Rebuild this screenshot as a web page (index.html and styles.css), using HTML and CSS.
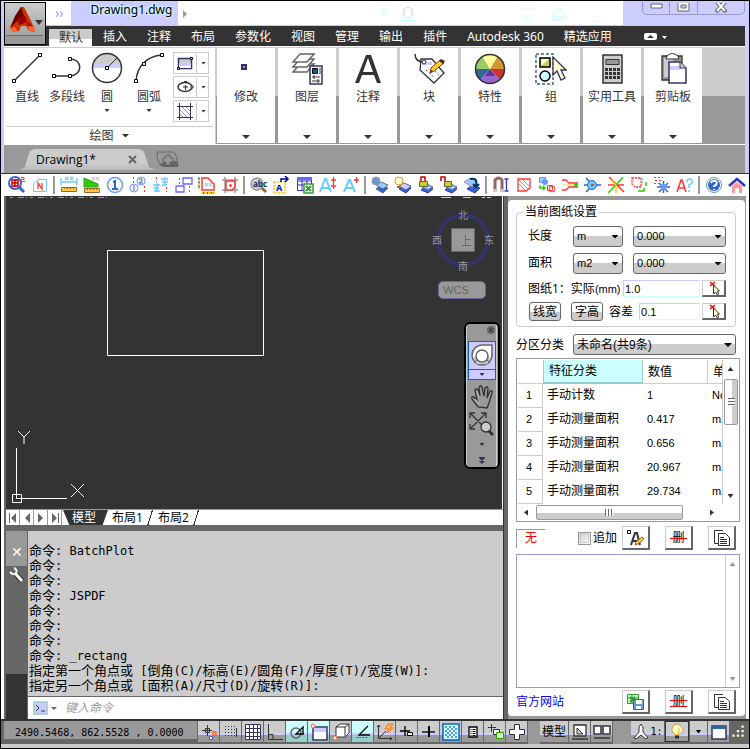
FILE: index.html
```html
<!DOCTYPE html>
<html lang="zh-CN">
<head>
<meta charset="utf-8">
<title>Drawing1.dwg</title>
<link rel="stylesheet" href="styles.css">
</head>
<body>
<header class="head">
  <button class="app" aria-label="应用程序菜单"><svg width="40" height="41" viewBox="0 0 40 41"><path fill="#999" d="M1 32h37v7H1z"/><path fill="#669" d="M1 32h37v1H1z"/><path fill="#c30" d="M16 4 5 25l3 4 6-1 2-5h5l3 5 6 1-3-9-8-16z"/><path fill="#600" d="m16 4 3 9-8 6-6 6 5-12z"/><path fill="#f63" d="M5 25l2 4 6 0-3-5zM23 23l7 1v5l-6-1z"/><path fill="#900" d="m12 14 8-1 2 6-8 3zM22 19l6 4-5 0z"/><path fill="#333" d="M30 17h8l-4 5z"/></svg></button>
  <div class="title">
    <span class="quick">››</span>
    <h1>Drawing1.dwg</h1>
    <span class="search"><svg width="445" height="24" viewBox="0 0 445 24"><path fill="#999" d="m5 9 4 4-4 4z"/><g fill="none" stroke="#cff" stroke-width="1.3"><path d="M205 15v-6h3v6M222 20l6-4h4l6 4zM344 8h5m3 0h5m-12 9h4l4 2M379 8l-5 8h14l-5-8zM374 19h12M417 20h4"/></g><path fill="none" stroke="#ccf" d="M226 15V8l4-2 4 2v7"/></svg></span>
    <div class="win">
      <button aria-label="最小化"><svg width="13" height="6" viewBox="0 0 13 6"><path fill="#fff" stroke="#666" d="M1 1h11v4H1z"/></svg></button>
      <button aria-label="还原"><svg width="13" height="9" viewBox="0 0 13 9"><path fill="#fff" stroke="#666" d="M1-2h11V8H1z"/><path fill="#ccf" stroke="#666" d="M4 2h5v3H4z"/></svg></button>
      <button aria-label="关闭"><svg width="12" height="10" viewBox="0 0 12 10"><path stroke="#666" stroke-width="4" d="m1-2 10 11M11-2 1 9"/><path stroke="#fff" stroke-width="2" d="m2-1 8 9M10-1 2 8"/></svg></button>
    </div>
  </div>
  <nav class="menu">
    <a href="#" class="on">默认</a><a href="#">插入</a><a href="#">注释</a><a href="#">布局</a><a href="#">参数化</a><a href="#">视图</a><a href="#">管理</a><a href="#">输出</a><a href="#">插件</a><a href="#">Autodesk 360</a><a href="#">精选应用</a>
    <svg class="fold" width="24" height="8" viewBox="0 0 24 8"><rect width="13" height="7" rx="2" fill="#fff"/><path fill="#333" d="M3 5h7L6.500 2zM5 3h3"/><path fill="#fff" d="M18 3h5l-2.500 3z"/></svg>
  </nav>
  <div class="ribbon">
    <section class="draw">
      <div class="tools">
        <button class="tool"><svg width="32" height="32" viewBox="0 0 32 32"><path stroke="#333" stroke-width="1.500" d="M3 29 29 3"/><path fill="#fff" stroke="#000" d="M1.500 27.500h3v3h-3zM27.500 1.500h3v3h-3z"/></svg>直线</button>
        <button class="tool"><svg width="32" height="32" viewBox="0 0 32 32"><path fill="none" stroke="#333" stroke-width="1.500" d="M3 24h16c13-1 13-17 0-17"/><path fill="#fff" stroke="#000" d="M1.500 22.500h3v3h-3zM17.500 22.500h3v3h-3zM17.500 5.500h3v3h-3z"/></svg>多段线</button>
        <button class="tool"><svg width="32" height="32" viewBox="0 0 32 32"><circle cx="16" cy="16" r="14.500" fill="#fff"/><path fill="#ccc" d="M2.500 12C7-2 25-2 29.500 12z"/><path fill="#ccf" d="M2 12h28v4H2z"/><circle cx="16" cy="16" r="14.500" fill="none" stroke="#333" stroke-width="1.500"/><path stroke="#333" d="M16 16 26 6"/><path fill="#fff" stroke="#000" d="M14.500 14.500h3v3h-3z"/></svg>圆<i class="dn"></i></button>
        <button class="tool"><svg width="32" height="32" viewBox="0 0 32 32"><path fill="none" stroke="#333" stroke-width="1.500" d="M3 29C4 14 14 4 29 3"/><path fill="#fff" stroke="#000" d="M1.500 27.500h3v3h-3zM9.500 10.500h3v3h-3zM27.500 1.500h3v3h-3z"/></svg>圆弧<i class="dn"></i></button>
        <div class="minis">
          <button class="mini" aria-label="矩形"><svg width="22" height="19" viewBox="0 0 22 19"><path fill="#ccc" stroke="#336" stroke-width="1.500" d="M4.500 4.500h13v10h-13z"/><path fill="#fff" d="M5 11h12v3H5z"/><path fill="#ccf" d="M5 9h12v3H5z"/><path fill="#fff" stroke="#000" d="M3.500 13.500h2v2h-2zM16.500 3.500h2v2h-2z"/></svg><i class="dn"></i></button>
          <button class="mini" aria-label="椭圆"><svg width="22" height="19" viewBox="0 0 22 19"><ellipse cx="11" cy="9" rx="7" ry="4.500" fill="none" stroke="#333" stroke-width="1.500"/><path stroke="#333" d="M9 9h5m-2.500-2v5"/><path fill="#fff" stroke="#333" d="M17 8h2v2h-2zM10 3.500h3"/></svg><i class="dn"></i></button>
          <button class="mini" aria-label="图案填充"><svg width="22" height="19" viewBox="0 0 22 19"><path stroke="#99c" d="m5 7 8 8M5 11l4 4M8 5l8 8M12 5l5 5"/><path fill="none" stroke="#336" d="M5.500 1v17M16.500 1v17M3 4.500h16M3 15.500h16"/></svg><i class="dn"></i></button>
        </div>
      </div>
      <button class="group">绘图 <i class="dn big"></i></button>
    </section>
    <button class="panel"><svg width="32" height="32" viewBox="0 0 32 32"><path fill="#99c" stroke="#336" stroke-width="2" d="M12 12h4v4h-4z"/></svg>修改<i class="dn big"></i></button>
    <button class="panel"><svg width="32" height="32" viewBox="0 0 32 32"><g fill="#fff" stroke="#666" stroke-width="1.500"><path d="m2 19 7-8h14l-7 8z"/><path d="m2 14 7-8h14l-7 8z"/><path d="m2 9 7-8h14l-7 8z"/></g><path fill="#fff" stroke="#336" stroke-width="1.500" d="M19 13h12v18H19z"/><path fill="#069" stroke="#000" d="M21.500 15.500h5v5h-5z"/><path fill="#999" d="M28 15h2v6h-2z"/><path stroke="#333" d="M21 24h8M21 28h8m-6-6v4m4 0v4"/></svg>图层<i class="dn big"></i></button>
    <button class="panel"><svg width="32" height="32" viewBox="0 0 32 32"><path fill="#333" fill-rule="evenodd" d="M14 2h5l10 28h-4l-3-8H10l-3 8H3zm2 3-5 14h10z"/></svg>注释<i class="dn big"></i></button>
    <button class="panel"><svg width="32" height="32" viewBox="0 0 32 32"><path fill="#fff" stroke="#333" stroke-width="1.300" d="M8 6h11l12 14-10 10L7 17z"/><path fill="#ccf" d="M9 9h10v3H9z"/><path fill="none" stroke="#333" stroke-width="1.500" d="M2 1c0 6 4 8 9 8"/><circle cx="11" cy="9" r="2" fill="#fff" stroke="#333"/><path stroke="#666" stroke-dasharray="2 2" d="m13 17 9 8m0-7 5 5"/><path fill="#fc3" stroke="#930" d="m17 20 1-5 9-8 4 3-10 8z"/><path fill="#333" d="m17 20 1-3 2 1zM26 8l2-2 4 2-2 3z"/></svg>块<i class="dn big"></i></button>
    <button class="panel"><svg width="32" height="32" viewBox="0 0 32 32"><path fill="#ff9" d="m16 16-8-13q8-5 16 0z"/><path fill="#c93" d="M16 16 24 3q7 5 7 13z"/><path fill="#c33" d="M16 16h15q0 8-5 11z"/><path fill="#96c" d="m16 16 10 11q-10 8-20 0z"/><path fill="#639" d="m16 16 5 7H11z"/><path fill="#369" d="M16 16 6 27q-5-4-5-11z"/><path fill="#9c6" d="M16 16H1Q1 8 8 3z"/><circle cx="16" cy="16" r="14.500" fill="none" stroke="#333" stroke-width="1.500"/></svg>特性<i class="dn big"></i></button>
    <button class="panel"><svg width="32" height="32" viewBox="0 0 32 32"><path fill="none" stroke="#369" stroke-width="1.500" stroke-dasharray="3 2" d="M1 1h17v30H1z"/><path fill="#cc6" stroke="#000" stroke-width="1.500" d="M5 5h10v9H5z"/><path fill="#ffc" d="M6 6h8l-8 7z"/><circle cx="10" cy="23" r="5" fill="#cff" stroke="#000" stroke-width="1.500"/><path fill="#ffc" stroke="#336" stroke-width="1.300" d="M18 4v18l4-4 4 9 4-2-4-8h5z"/></svg>组<i class="dn big"></i></button>
    <button class="panel"><svg width="32" height="32" viewBox="0 0 32 32"><path fill="#ccc" stroke="#333" stroke-width="1.500" d="M7 2h19v28H7z"/><path fill="#999" stroke="#333" d="M10 6.500h13v5H10z"/><g fill="#333"><path d="M9 15h3v3H9zM13 15h3v3h-3zM17 15h3v3h-3zM21 15h3v3h-3zM9 19h3v3H9zM13 19h3v3h-3zM17 19h3v3h-3zM21 19h3v3h-3zM9 23h3v3H9zM13 23h3v3h-3zM17 23h3v3h-3zM21 23h3v3h-3z"/></g></svg>实用工具<i class="dn big"></i></button>
    <button class="panel"><svg width="32" height="32" viewBox="0 0 32 32"><path fill="#999" stroke="#333" stroke-width="1.300" d="M5 3h20v24H5z"/><path fill="#ccc" d="M7 5h9v19H7z"/><path fill="#fff" stroke="#333" d="M10 3q5-5 11 0l1 3H9z"/><path fill="#fff" stroke="#336" stroke-width="1.500" d="M12 9h11l6 6v15H12z"/><path fill="#ccf" d="M13 13h10v4H13z"/><path fill="#ccc" stroke="#336" d="M23 9v6h6"/></svg>剪贴板<i class="dn big"></i></button>
  </div>
  <div class="docs">
    <div class="doc"><a href="#">Drawing1*</a><button aria-label="关闭图形"><svg width="9" height="9" viewBox="0 0 9 9"><path stroke="#666" stroke-width="2" d="m1 1 7 7M8 1 1 8"/></svg></button></div>
    <button class="newdoc" aria-label="新图形"><svg width="24" height="18" viewBox="0 0 24 18"><path fill="#999" stroke="#666" d="M1 1h16q4 1 5 14H7Q1 13 1 1z"/><path fill="#666" d="M3 14q8-7 19-3v5H8z"/><path fill="#999" stroke="#666" d="M10 4h4v3h3v4h-3v3h-4v-3H7V7h3z"/></svg></button>
  </div>
</header>

<div class="bar">
  <button aria-label="查找面积"><svg viewBox="0 0 18 18"><circle cx="7" cy="7" r="6" fill="#fff" stroke="#36c" stroke-width="2"/><path stroke="#36c" stroke-width="3" d="m11 11 5 5"/><path fill="none" stroke="#c00" stroke-width="1.500" d="M4 4h6v6H4zm0 3h6M7 3v8"/><path fill="none" stroke="#f33" d="M13 1.500h3v2h-3v2h4"/></svg></button>
  <button aria-label="编号"><svg viewBox="0 0 18 18"><path fill="none" stroke="#6cf" d="M2.500 15.500v-8l5-4h8v12z"/><path fill="none" stroke="#f33" stroke-width="1.300" d="M7 13V7l4 6V7"/></svg></button><hr>
  <button aria-label="长度"><svg viewBox="0 0 18 18"><path fill="#fc3" stroke="#963" d="M1.500 11.500h15v4h-15z"/><path stroke="#6cf" stroke-width="1.300" d="M1 2v7m16-7v7M2 6h15M5 1l3 3m0-3L5 4m5-3 3 3m0-3-3 3"/><path stroke="#963" d="M4.500 11v2m3-2v2m3-2v2m3-2v2"/></svg></button>
  <button aria-label="面积"><svg viewBox="0 0 18 18"><path fill="#3c0" stroke="#393" d="m1 2 14 6v3H1z"/><path fill="#fc3" stroke="#963" d="M1.500 12.500h15v4h-15z"/><path stroke="#963" d="M4.500 12v2m3-2v2m3-2v2m3-2v2"/><path stroke="#6cf" d="m9 1 3 3m0-3L9 4m4-3 3 3m0-3-3 3"/></svg></button>
  <button aria-label="计数"><svg viewBox="0 0 18 18"><circle cx="9" cy="9" r="7.500" fill="#fff" stroke="#69f" stroke-width="1.500"/><path stroke="#36c" stroke-width="2" d="M9 4v9M6 13h6M7 6l2-1"/></svg></button>
  <button aria-label="连续计数"><svg viewBox="0 0 18 18"><circle cx="5" cy="12" r="4" fill="none" stroke="#69f"/><circle cx="12" cy="5" r="4" fill="none" stroke="#69f"/><path fill="none" stroke="#36c" d="M5 9v6M10 3h3v2l-3 2h4"/><path stroke="#f33" stroke-dasharray="2 2" d="M4.500 1v6M15.500 10v6"/></svg></button>
  <button aria-label="文字求和"><svg viewBox="0 0 18 18"><path stroke="#6cf" stroke-width="1.300" d="M9 3h7M10 6h6m-6 3h5M13 1v8M1 9h7M2 12h5m-5 3h6M5 7v9"/><path stroke="#f33" stroke-dasharray="2 2" d="M4.500 1v5M14.500 11v5"/></svg></button>
  <button aria-label="对齐"><svg viewBox="0 0 18 18"><path fill="none" stroke="#66f" stroke-width="1.300" d="M8 2h9v6H8zM1 10h8v6H1z"/><path stroke="#f33" stroke-dasharray="2 2" d="M4.500 2v6M14.500 10v6"/></svg></button>
  <button aria-label="区域标注"><svg viewBox="0 0 18 18"><path fill="#fff" stroke="#f33" stroke-width="1.500" d="M4 2h6l6 6v6H4z"/><path stroke="#fc0" stroke-width="2" d="M1 1v12m3 4h13"/><path stroke="#36c" stroke-width="2" stroke-dasharray="1 3" d="M1 2v11m4 4h11"/><path stroke="#6cf" d="m7 7 3 3m0-3-3 3m4-3 3 3m0-3-3 3"/></svg></button>
  <button aria-label="边框"><svg viewBox="0 0 18 18"><path stroke="#999" stroke-width="1.500" d="M4 1v16M14 1v16M1 4h16M1 14h16"/><path fill="#fff" stroke="#f33" stroke-width="1.500" d="M5 5h9v6l-3 3H5z"/><path stroke="#f33" d="M8 9.500h3M9.500 8v3"/></svg></button><hr>
  <button aria-label="查找文字"><svg viewBox="0 0 18 18"><circle cx="7" cy="8" r="6" fill="#ccc" stroke="#999" stroke-width="1.500"/><path stroke="#963" stroke-width="3" d="m12 12 4 4"/><text x="3" y="11" font-size="8" font-weight="700" fill="#036">abc</text></svg></button>
  <button aria-label="文字框"><svg viewBox="0 0 18 18"><path fill="none" stroke="#fc0" stroke-dasharray="2 1" stroke-width="1.500" d="M1 6h11v11H1z"/><text x="3" y="15" font-size="9" font-weight="700" fill="#009">A</text><path fill="none" stroke="#009" stroke-width="1.500" d="M8 6V3h7m-3-3 3 3-3 3"/></svg></button>
  <button aria-label="导出表格"><svg viewBox="0 0 18 18"><path fill="#fff" stroke="#33c" d="M1.500 1.500h14v13h-14zM2 5h13M2 9h13M6 3v11M11 3v11"/><path fill="#66f" d="M1 1h15v3H1z"/><path fill="#fff" stroke="#393" stroke-width="1.500" d="M8 8h9v9H8z"/><path stroke="#393" stroke-width="2" d="m10 10 5 5m0-5-5 5"/></svg></button>
  <button aria-label="文字高度"><svg viewBox="0 0 18 18"><path fill="none" stroke="#6cf" stroke-width="2" d="M1 16 6 3h1l5 13M3 12h7"/><path stroke="#f33" stroke-width="1.300" d="M14.500 1v12M12 4h5m-5 6h5"/></svg></button>
  <button aria-label="增加文字"><svg viewBox="0 0 18 18"><path fill="none" stroke="#6cf" stroke-width="2" d="M2 16 7 4h1l5 12M4 12h7"/><path stroke="#f33" stroke-width="1.300" d="M14.500 1v6M12 4h5"/></svg></button><hr>
  <button aria-label="关闭图层"><svg viewBox="0 0 18 18"><path fill="#36c" stroke="#669" d="m5 13 5-4 7 3-5 5z"/><path fill="#9cf" stroke="#669" d="m5 9 5-3 7 3-5 4z"/><circle cx="5" cy="5" r="4" fill="#69c" stroke="#999"/></svg></button>
  <button aria-label="打开图层"><svg viewBox="0 0 18 18"><path fill="#36c" stroke="#33c" d="m5 13 5-4 7 3-5 5z"/><path fill="#ccf" stroke="#669" d="m5 10 5-3 7 3-5 4z"/><circle cx="5" cy="5" r="4" fill="#ffc" stroke="#c93"/><path stroke="#963" stroke-width="2" d="M3 11h4"/></svg></button>
  <button aria-label="锁定图层"><svg viewBox="0 0 18 18"><path fill="#36c" stroke="#33c" d="m4 14 5-4 7 3-5 4z"/><path fill="#9cf" stroke="#669" d="m5 11 5-3 6 3-5 3z"/><path fill="none" stroke="#c00" stroke-width="1.500" d="M4 6V1h4v5"/><path fill="#cc3" stroke="#663" d="M2.500 5.500h8v5h-8z"/></svg></button>
  <button aria-label="解锁图层"><svg viewBox="0 0 18 18"><path fill="#36c" stroke="#33c" d="m5 14 5-4 7 3-5 4z"/><path fill="#9cf" stroke="#669" d="m6 11 5-3 6 3-5 3z"/><path fill="none" stroke="#c00" stroke-width="1.500" d="M1 5V1h4v5"/><path fill="#cc3" stroke="#663" d="M4.500 5.500h7v5h-7z"/></svg></button>
  <button aria-label="恢复图层"><svg viewBox="0 0 18 18"><path fill="#36c" stroke="#33c" d="m4 13 5-4 8 3-5 5z"/><path fill="#9cf" stroke="#99c" d="m1 6 6-4 7 4-5 5z"/><path fill="none" stroke="#036" stroke-width="2" d="M7 3q8-2 6 7m-3-2 3 3 3-3"/></svg></button><hr>
  <button aria-label="捕捉"><svg viewBox="0 0 18 18"><path fill="none" stroke="#966" stroke-width="3" d="M3 16V4q4-4 7 0v12"/><path stroke="#ccc" stroke-width="3" d="M3 13v3m7-3v3"/><path stroke="#33c" stroke-width="1.300" d="M14.500 3v12m-2-12h4m-4 12h4"/></svg></button>
  <button aria-label="填充"><svg viewBox="0 0 18 18"><path stroke="#999" d="m4 4 10 10M8 4l6 6M4 8l6 6"/><path fill="none" stroke="#f33" stroke-width="1.300" d="M3 3h12v9l-4 3H3z"/></svg></button>
  <button aria-label="替换块"><svg viewBox="0 0 18 18"><path fill="#9cf" stroke="#69f" d="M1.500 1.500h6v5h-6z"/><circle cx="7" cy="6" r="3" fill="#69f"/><path fill="none" stroke="#3c0" stroke-width="1.500" d="M2 9v3h5m-2-2 2 2-2 2"/><path fill="none" stroke="#f33" d="M9.500 9.500h5v5h-5z"/><circle cx="14" cy="13" r="3" fill="none" stroke="#f33"/></svg></button>
  <button aria-label="合并线"><svg viewBox="0 0 18 18"><path fill="none" stroke="#f33" stroke-width="1.300" d="M1 4h4l3 3h9M1 14h4l3-3h9"/><path stroke="#fc3" d="M2 9h12"/><circle cx="15" cy="9" r="2" fill="#3c0"/></svg></button>
  <button aria-label="交点"><svg viewBox="0 0 18 18"><path stroke="#36c" stroke-width="1.500" d="M0 9h17M2 2l5 5m-5 9 5-5"/><circle cx="8" cy="9" r="4.500" fill="#6cf" stroke="#36c"/><path stroke="#f33" stroke-width="2" d="M7 9h3"/></svg></button>
  <button aria-label="打断"><svg viewBox="0 0 18 18"><path stroke="#f33" stroke-width="1.500" d="m2 1 15 15M1 9h16"/><path stroke="#3c0" stroke-width="1.500" d="M9 9 1 17M9 9l7-8"/><path stroke="#fc0" stroke-width="1.500" d="M9 9v8M9 9 4 4"/></svg></button>
  <button aria-label="轮廓"><svg viewBox="0 0 18 18"><path fill="none" stroke="#f33" stroke-dasharray="2 1" stroke-width="1.300" d="M2 2h9v9H5l-3-3z"/><path fill="none" stroke="#3c0" stroke-width="1.500" d="M16 6v4M8 15h6v-3"/><path stroke="#6cf" d="M12 1v7"/></svg></button>
  <button aria-label="分解"><svg viewBox="0 0 18 18"><path stroke="#f33" stroke-dasharray="2 2" d="M1 1.500h9M2 4.500h7M1 7.500h5"/><path stroke="#36c" stroke-width="1.500" d="m6 7 9 9M15 7l-9 9M10.500 5v12M4 11h13"/><circle cx="10.500" cy="11" r="3" fill="#69f"/></svg></button>
  <button aria-label="文字查询"><svg viewBox="0 0 18 18"><path fill="none" stroke="#f33" stroke-width="1.500" d="m1 16 4-12h1l4 12M3 12h6"/><path fill="none" stroke="#6cf" stroke-width="1.500" d="M11 6q0-3 3-3t2 4l-3 2v3m0 2v2"/></svg></button><hr>
  <button aria-label="帮助"><svg viewBox="0 0 18 18"><circle cx="9" cy="9" r="7.500" fill="#fff" stroke="#69c"/><circle cx="9" cy="9" r="6" fill="#36c"/><path fill="none" stroke="#fff" stroke-width="2" d="M6 7q1-3 4-2t1 4l-2 1v1m0 2v1"/></svg></button>
  <button aria-label="主页"><svg viewBox="0 0 18 18"><path fill="#f99" d="M4 10 9 6l5 4v7h-3v-5H7v5H4z"/><path fill="none" stroke="#33c" stroke-width="2.500" d="m1 10 8-7 8 7"/></svg></button>
</div>

<main class="main">
  <div class="left">
    <div class="canvas">
      <svg class="sketch" width="260" height="162" viewBox="0 0 260 162"><path fill="none" stroke="#fff" d="M101.500 53.500h156v105h-156z"/><path stroke="#999" stroke-dasharray="3 5 6 2 1 3" d="M4 .500h100"/></svg>
      <svg class="ucs" width="80" height="76" viewBox="0 0 80 76"><path fill="none" stroke="#fff" d="M10.500 19v50.500H61M6.500 65.500v8h9v-8h-9zM12 2l6 6 6-6m-6 6v7M65 55l13 13M78 55 65 68"/></svg>
      <svg class="clip" width="56" height="3" viewBox="0 0 56 3"><path stroke="#ccc" d="M0 1.500h10m12 0h8m11 0h3m2 0h4"/></svg>
      <div class="cube">
        <svg width="64" height="64" viewBox="0 0 64 64"><circle cx="32" cy="33" r="25" fill="none" stroke="#336" stroke-width="4"/><path fill="#999" stroke="#666" d="M20.500 21.500h23v23h-23z"/><path fill="none" stroke="#666" d="M34.500 28v10m0-5.500h5M31 38.500h9"/></svg>
        <b class="n">北</b><b class="w">西</b><b class="e">东</b><b class="s">南</b>
      </div>
      <button class="wcs">WCS<i class="dn"></i></button>
      <div class="nav">
        <button class="x" aria-label="关闭"><svg width="8" height="8" viewBox="0 0 8 8"><circle cx="4" cy="4" r="4" fill="#666"/><path stroke="#333" d="m2 2 4 4m0-4L2 6"/></svg></button>
        <button class="wheel" aria-label="控制盘"><svg width="26" height="26" viewBox="0 0 26 26"><path fill="#fff" stroke="#666" stroke-width="1.500" d="M13 2h10v11a10 10 0 1 1-10-11z"/><path fill="#ccc" d="M4 14h18l-4 7H8z"/><circle cx="13" cy="13" r="6" fill="#fff" stroke="#666" stroke-width="1.500"/><path stroke="#666" d="m5 20 4-4m12 4-4-4"/></svg></button>
        <button class="more" aria-label="更多"><i class="dn"></i></button>
        <button class="pan" aria-label="平移"><svg width="24" height="26" viewBox="0 0 24 26"><path fill="#999" stroke="#333" stroke-width="1.300" d="M8 23 2 15q-1-3 2-2l3 3L5 6q1-2 3 0l2 6-1-9q2-2 3 0l2 9 1-8q2-2 3 0l-1 10 3-7q3-1 2 2l-3 10-2 5z"/><path fill="none" stroke="#ccc" d="m5 15 4 5m-2-13 2 6"/></svg></button>
        <button class="zoom" aria-label="缩放"><svg width="26" height="24" viewBox="0 0 26 24"><path fill="none" stroke="#333" stroke-width="1.300" d="m2 2 14 14M16 2 2 16M1 6V1h5m6 0h5v5M1 12v5h5"/><circle cx="17" cy="15" r="5" fill="#ccc" stroke="#333" stroke-width="1.300"/><path stroke="#333" stroke-width="3" d="m20 19 4 4"/></svg><i class="dn"></i></button>
        <button class="opt" aria-label="选项"><svg width="8" height="8" viewBox="0 0 8 8"><path fill="#336" d="M1 0h6v1H1zm0 1h6L4 4zm0 3h6L4 7z"/></svg></button>
      </div>
    </div>
    <div class="sheets">
      <button aria-label="首页"><svg width="10" height="10" viewBox="0 0 10 10"><path fill="#666" d="M1 0h1v10H1zM8 0v10L3 5z"/></svg></button><button aria-label="上一页"><svg width="10" height="10" viewBox="0 0 10 10"><path fill="#666" d="M8 0v10L3 5z"/></svg></button><button aria-label="下一页"><svg width="10" height="10" viewBox="0 0 10 10"><path fill="#666" d="M2 0v10l5-5z"/></svg></button><button aria-label="末页"><svg width="10" height="10" viewBox="0 0 10 10"><path fill="#666" d="M2 0v10l5-5zM8 0h1v10H8z"/></svg></button>
      <a href="#" class="model">模型</a><a href="#">布局1</a><a href="#">布局2</a>
    </div>
    <div class="cmd">
      <div class="grip"><button aria-label="关闭">✕</button><button class="wrench" aria-label="自定义"><svg width="16" height="16" viewBox="0 0 16 16"><path fill="none" stroke="#333" stroke-width="5" d="m6 6 7 8"/><path fill="none" stroke="#fff" stroke-width="3" d="m6 6 7 8"/><path fill="none" stroke="#fff" stroke-width="2" d="M5 1q4 2 2 5T1 5"/></svg></button><span></span></div>
      <div class="log">
        <ol>
          <li>命令<span>: BatchPlot</span></li><li>命令<span>:</span></li><li>命令<span>:</span></li><li>命令<span>: JSPDF</span></li><li>命令<span>:</span></li><li>命令<span>:</span></li><li>命令<span>:</span></li><li>命令<span>: _rectang</span></li>
          <li>指定第一个角点或<span> [</span>倒角<span>(C)/</span>标高<span>(E)/</span>圆角<span>(F)/</span>厚度<span>(T)/</span>宽度<span>(W)]:</span></li>
          <li>指定另一个角点或<span> [</span>面积<span>(A)/</span>尺寸<span>(D)/</span>旋转<span>(R)]:</span></li>
        </ol>
        <label class="prompt"><svg width="26" height="14" viewBox="0 0 26 14"><path fill="#ccf" stroke="#9cc" stroke-width="1.500" d="M1 1h13v12H1z"/><path fill="none" stroke="#333" d="m3 4 3 3-3 3m5 0h4"/><path fill="#666" d="M18 6h6l-3 3z"/></svg><input type="text" placeholder="键入命令" aria-label="键入命令"></label>
      </div>
    </div>
  </div>

  <aside class="side">
    <div class="sheet">
      <fieldset>
        <legend>当前图纸设置</legend>
        <div class="row"><label for="len">长度</label><span class="sel unit"><select id="len"><option>m</option></select></span><span class="sel prec"><select aria-label="长度精度"><option>0.000</option></select></span></div>
        <div class="row second"><label for="area">面积</label><span class="sel unit"><select id="area"><option>m2</option></select></span><span class="sel prec"><select aria-label="面积精度"><option>0.000</option></select></span></div>
        <div class="row scale"><label for="real">图纸1：实际<span>(mm)</span></label><input id="real" type="text" value="1.0"><button class="pick" aria-label="拾取比例"><svg width="20" height="14" viewBox="0 0 20 14"><path stroke="#f00" stroke-width="1.500" d="m6 1 5 4m0-4L6 5"/><path fill="#ffc" stroke="#333" d="M9.500 4v9l2-2 2 3 1-1-1-3h2z"/></svg></button></div>
        <div class="row last"><button class="rnd">线宽</button><button class="rnd">字高</button><label for="tol">容差</label><input id="tol" type="text" value="0.1"><button class="pick" aria-label="拾取容差"><svg width="20" height="14" viewBox="0 0 20 14"><path stroke="#f00" stroke-width="1.500" d="m6 1 5 4m0-4L6 5"/><path fill="#ffc" stroke="#333" d="M9.500 4v9l2-2 2 3 1-1-1-3h2z"/></svg></button></div>
      </fieldset>
      <div class="class"><label for="cls">分区分类</label><span class="sel"><select id="cls"><option>未命名(共9条)</option></select></span></div>
      <div class="grid">
        <div class="view">
          <table>
            <thead><tr><th class="no"></th><th class="name">特征分类</th><th class="val">数值</th><th>单位</th></tr></thead>
            <tbody>
              <tr><td class="no">1</td><td>手动计数</td><td>1</td><td>No</td></tr>
              <tr><td class="no">2</td><td>手动测量面积</td><td>0.417</td><td>m2</td></tr>
              <tr><td class="no">3</td><td>手动测量面积</td><td>0.656</td><td>m2</td></tr>
              <tr><td class="no">4</td><td>手动测量面积</td><td>20.967</td><td>m2</td></tr>
              <tr><td class="no">5</td><td>手动测量面积</td><td>29.734</td><td>m2</td></tr>
            </tbody>
          </table>
        </div>
        <div class="vbar"><i class="up"></i><span class="thumb"></span><i class="dn"></i></div>
        <div class="hbar"><i class="lf"></i><span class="thumb"></span><i class="rt"></i></div>
      </div>
      <div class="acts">
        <output>无</output>
        <label><input type="checkbox">追加</label>
        <button class="sq" aria-label="编辑文字"><svg width="20" height="18" viewBox="0 0 20 18"><path fill="none" stroke="#333" stroke-width="2" d="m5 16 4-12h2l3 12M6 12h7"/><path fill="#fff" stroke="#000" d="M1.500 1.500h3v3h-3z"/><path fill="#fc3" stroke="#963" d="m9 16 1-3 6-5 2 2-6 5z"/></svg></button>
        <button class="sq"><s>删</s></button>
        <button class="sq" aria-label="复制"><svg width="18" height="18" viewBox="0 0 18 18"><path fill="#fff" stroke="#333" d="M10 1.500H1.500v13H5M5.500 4.500h7l4 4v8h-11z"/><path stroke="#333" d="M7 8.500h4m-4 2h7m-7 2h7m-7 2h7"/></svg></button>
      </div>
      <div class="result"><textarea aria-label="结果"></textarea><div class="vbar off"><i class="up"></i><i class="dn"></i></div></div>
      <div class="acts foot">
        <a href="#">官方网站</a>
        <button class="sq" aria-label="保存表格"><svg width="20" height="18" viewBox="0 0 20 18"><path fill="#cfc" stroke="#393" d="M1.500 1.500h11v9h-11zM2 5h10M6 2v8"/><path stroke="#393" stroke-width="2" d="m4 4 5 5m0-5L4 9"/><path fill="#69c" stroke="#369" d="M7.500 6.500h10v10h-10z"/><path fill="#fff" d="M10 7h6v4h-6zM10 13h5v3h-5z"/></svg></button>
        <button class="sq"><s class="all">删</s></button>
        <button class="sq" aria-label="全部复制"><svg width="18" height="18" viewBox="0 0 18 18"><path fill="#fff" stroke="#333" d="M10 1.500H1.500v13H5M5.500 4.500h7l4 4v8h-11z"/><path stroke="#333" d="M7 8.500h4m-4 2h7m-7 2h7m-7 2h7"/></svg></button>
      </div>
    </div>
  </aside>
</main>

<footer class="status">
  <output>2490.5468, 862.5528 , 0.0000</output>
  <button aria-label="推断约束"><svg viewBox="0 0 18 18"><path stroke="#333" d="M2 7.500h10M7.500 2v11"/><path fill="none" stroke="#333" d="M5.500 5.500h4v4h-4z"/><path fill="none" stroke="#f63" stroke-width="1.500" d="M13 16V9h3v3h-3"/><path fill="#fff" stroke="#36c" d="M9.500 13.500h3v3h-3z"/></svg></button>
  <button aria-label="捕捉模式"><svg viewBox="0 0 18 18"><path stroke="#333" stroke-dasharray="1 2" d="M3 3.500h10M3 6.500h10M3 9.500h10M3 12.500h10"/><path stroke="#333" d="M14.500 5v9"/></svg></button>
  <button aria-label="栅格"><svg viewBox="0 0 18 18"><path fill="#fff" stroke="#336" d="M1.500 1.500h15v15h-15zM5.500 1v16m4-16v16m4-16v16M1 5.500h16m-16 4h16m-16 4h16"/></svg></button>
  <button aria-label="正交"><svg viewBox="0 0 18 18"><path fill="none" stroke="#333" d="M2.500 1v15.500H17M3 11.500h4v5"/></svg></button>
  <button class="lit" aria-label="极轴"><svg viewBox="0 0 18 18"><circle cx="8" cy="10" r="5" fill="none" stroke="#666" stroke-width="1.500"/><path fill="none" stroke="#000" stroke-width="1.300" d="M16 11H8l7-7v7"/></svg></button>
  <button class="lit" aria-label="对象捕捉"><svg viewBox="0 0 18 18"><path fill="#fff" stroke="#336" stroke-width="1.500" d="M3 4h14v13H3z"/><path fill="#ccf" d="M4 5h12v4H4z"/><circle cx="3" cy="3" r="2" fill="#fff" stroke="#f63"/></svg></button>
  <button aria-label="三维捕捉"><svg viewBox="0 0 18 18"><path fill="#fff" stroke="#333" d="m4 4 4-3h9v9l-4 4H4zM4 4h9v9m0-9 4-3"/><circle cx="3" cy="15" r="2" fill="#fff" stroke="#f63"/></svg></button>
  <button class="lit" aria-label="对象追踪"><svg viewBox="0 0 18 18"><path fill="none" stroke="#000" stroke-width="1.300" d="M14 3 5 12h11"/><path stroke="#666" stroke-dasharray="2 1" d="M2 14.500h12"/></svg></button>
  <button aria-label="动态UCS"><svg viewBox="0 0 18 18"><path fill="none" stroke="#333" d="M2.500 2v13.500H16M3 15 10 8M1 4l2-2 1 2m10 10 2 2-2 1"/><path fill="#fc3" stroke="#f63" d="m12 1-3 5h4l-2 4 6-5h-3l3-4z"/></svg></button>
  <button aria-label="动态输入"><svg viewBox="0 0 18 18"><path stroke="#000" stroke-width="1.300" d="M2 8h10M7 3v10"/><path fill="#fff" stroke="#000" d="M9.500 9.500h5v3h-5z"/></svg></button>
  <button aria-label="线宽"><svg viewBox="0 0 18 18"><path stroke="#000" stroke-width="1.300" d="M2 9h13"/><path stroke="#000" stroke-width="2" d="M9 3v11"/></svg></button>
  <button aria-label="透明度"><svg viewBox="0 0 18 18"><path fill="#cff" stroke="#06c" stroke-width="1.500" d="M1 1h16v16H1z"/><path stroke="#69c" stroke-width="2" stroke-dasharray="2 2" d="M3 4h12M5 6h10M3 8h12M5 10h10M3 12h12M5 14h10"/></svg></button>
  <button aria-label="快捷特性"><svg viewBox="0 0 18 18"><path fill="#fff" stroke="#000" stroke-width="1.300" d="M5 4h8v10H5z"/><path stroke="#000" stroke-dasharray="1 1 3 9" d="M6.500 6.500h6m-6 2h6m-6 2h6m-6 2h6"/></svg></button>
  <button aria-label="选择循环"><svg viewBox="0 0 18 18"><path stroke="#333" d="M2 4.500h8M5.500 1v8"/><path fill="#fff" stroke="#333" d="M7.500 6.500h6v5h-6z"/><path fill="#cfc" stroke="#390" d="M10.500 9.500h7v6h-7z"/></svg></button>
  <button aria-label="注释监视器"><svg viewBox="0 0 18 18"><path fill="#fff" stroke="#333" d="M6.500 1.500h5v5h5v5h-5v5h-5v-5h-5v-5h5z"/></svg></button>
  <span class="gap"></span>
  <button class="txt">模型</button>
  <button aria-label="图纸"><svg viewBox="0 0 18 18"><path fill="#fff" stroke="#333" stroke-width="1.300" d="M3 2h12v11H3z"/><path fill="#ccc" stroke="#333" d="M6 11V5l6 6z"/><path stroke="#333" stroke-width="1.500" d="M1 16h16"/></svg></button>
  <button aria-label="快速查看"><svg viewBox="0 0 18 18"><path fill="#fff" stroke="#333" stroke-width="1.500" d="M1 3h7v8H1zM10 3h7v8h-7z"/><path stroke="#333" stroke-width="1.500" d="M1 15h16"/></svg></button>
  <span class="gap wide"></span>
  <button class="txt ratio"><svg viewBox="0 0 18 18"><path fill="#fff" stroke="#333" d="M9 1 7 4v5l-5 6 2 1 5-4 5 4 2-1-5-6V4z"/></svg>1:</button>
  <button class="bulb" aria-label="注释可见性"><svg viewBox="0 0 18 18"><path fill="#ffc" stroke="#c93" d="M7 12Q2 7 5 3t8 0-2 9z"/><path fill="#fc6" d="M10 4q4 3 1 8H8q3-3 2-8z"/><path stroke="#333" stroke-width="3" d="M7 14h4"/></svg></button>
  <button class="down" aria-label="菜单"><i class="dn"></i></button>
  <button aria-label="全屏显示"><svg viewBox="0 0 18 18"><path fill="#fff" stroke="#336" stroke-width="1.500" d="M2 3h14v13H2z"/><path fill="#369" d="M2 2h14v4H2z"/></svg></button>
  <svg class="resize" viewBox="0 0 14 14"><path stroke="#ffc" stroke-width="2" stroke-dasharray="2 2" d="M2 12h12M6 8h8M10 4h4"/></svg>
</footer>
</body>
</html>
```
FILE: styles.css
```css
* { box-sizing: border-box; }
body {
  margin: 0;
  min-height: 100vh;
  display: flex;
  flex-direction: column;
  border: 1px solid #000;
  background: #fff;
  color: #333;
  font: 12px/16px "Open Sans", "Noto Sans CJK SC", sans-serif;
}
button, input, select, textarea { font: inherit; color: inherit; margin: 0; padding: 0; border: 0; background: none; border-radius: 0; }
button { display: flex; align-items: center; justify-content: center; flex: none; }
svg { display: block; flex: none; }
a { color: inherit; text-decoration: none; }
.dn, .up, .lf, .rt { flex: none; background: #333; width: 5px; height: 3px; clip-path: polygon(0 0, 100% 0, 50% 100%); }
.dn.big { width: 8px; height: 4px; }
.up { clip-path: polygon(50% 0, 100% 100%, 0 100%); }
.lf { clip-path: polygon(0 50%, 100% 0, 100% 100%); }
.rt { clip-path: polygon(0 0, 100% 50%, 0 100%); }

/* header */
.head { position: relative; background: #ccf; padding: 0 4px 0 3px; }
.app { position: absolute; left: 3px; top: 1px; z-index: 2; border: 1px solid #000; background: linear-gradient(#ccc, #999); }
.title { display: flex; height: 25px; background: #fff; border-bottom: 1px solid #ccc; }
.quick { flex: none; width: 67px; padding-left: 51px; color: #99f; font-size: 14px; line-height: 24px; }
.title h1 { flex: none; margin: 0; width: 107px; padding-left: 14px; background: #ccf; color: #000; font: 12px/18px "Noto Sans", sans-serif; text-align: center; text-shadow: 0 0 3px #cff, 0 0 3px #cff, 0 0 4px #cff; }
.search { flex: 1; overflow: hidden; }
.win { display: flex; align-items: flex-start; justify-content: flex-end; flex: none; width: 122px; background: #ccf; }
.win button { width: 28px; height: 14px; border: 1px solid #99c; border-top: 0; align-items: flex-start; padding-top: 2px; }
.win button + button { border-left: 0; }
.win button:first-child { border-radius: 0 0 0 5px; }
.win button:last-child { width: 47px; border-radius: 0 0 5px 0; }
.menu { display: flex; align-items: stretch; height: 20px; padding-left: 45px; background: #333; color: #fff; line-height: 22px; font-family: "Noto Sans", "Noto Sans CJK SC", sans-serif; }
.menu a { flex: none; padding: 0 10px; }
.menu .on { margin: 3px 1px 0 0; padding: 0 9px 0 10px; background: linear-gradient(#ccc 10px, #fff 10px); color: #333; line-height: 17px; }
.fold { margin: 7px 0 0 22px; }
.ribbon { display: flex; height: 99px; border-top: 1px solid #fff; border-bottom: 1px solid #fff; background: linear-gradient(#ccc 49px, #999 49px); }
.draw { flex: none; width: 212px; display: flex; flex-direction: column; background: #fff; border-top: 1px solid #ccc; border-right: 1px solid #ccc; }
.tools { display: flex; flex: 1; margin: 0 2px; padding-top: 4px; border-bottom: 1px solid #ccc; }
.tool { width: 42px; flex-direction: column; justify-content: flex-start; color: #333; line-height: 18px; white-space: nowrap; }
.tool:nth-child(2) { width: 38px; }
.tool svg { margin-bottom: 4px; }
.tool .dn { margin-top: 3px; }
.minis { display: flex; flex-direction: column; gap: 2px; margin-left: 3px; }
.mini { width: 36px; height: 22px; border: 1px solid #ccc; justify-content: flex-start; }
.mini svg { border-right: 1px solid #ccc; width: 23px; }
.mini .dn { margin-left: 4px; }
.group { height: 17px; gap: 8px; line-height: 16px; }
.panel { width: 61px; flex-direction: column; justify-content: flex-start; padding: 5px 0 4px; background: #fff; border: 1px solid #ccc; border-image: linear-gradient(#ccc 50%, #999 50%) 1; border-width: 1px 2px 1px 1px; line-height: 18px; }
.panel svg { margin-bottom: 3px; }
.panel .dn { margin-top: auto; }
.docs { display: flex; align-items: center; height: 28px; padding: 4px 0 3px 15px; background: #999; }
.doc { display: flex; align-items: center; width: 137px; height: 21px; padding: 0 19px 0 17px; background: linear-gradient(#ccc, #ccc 14px, #bbb); clip-path: polygon(0 100%, 4% 88%, 8% 10%, 11% 0, 88% 0, 91% 10%, 95% 88%, 100% 100%); color: #000; }
.doc button { margin-left: auto; }

/* icon bar */
.bar { display: flex; align-items: center; height: 23px; padding-left: 4px; border-top: 1px solid #333; background: #fff; }
.bar button { width: 23px; height: 22px; }
.bar svg, .status svg { width: 18px; height: 18px; }
.bar hr { flex: none; width: 2px; height: 18px; margin: 0 2px; border: 0; background: #999; }

/* drawing area */
.main { flex: 1; display: flex; margin: 0 3px; border-left: 2px solid #666; }
.left { flex: 1; min-width: 0; display: flex; flex-direction: column; }
.canvas { position: relative; flex: 1; background: #333; border-right: 1px solid #fff; }
.sketch { position: absolute; left: 0; top: 1px; }
.ucs { position: absolute; left: 0; bottom: 4px; }
.clip { position: absolute; right: 5px; top: 0; }
.cube { position: absolute; right: 7px; top: 11px; width: 64px; height: 64px; }
.cube b { position: absolute; color: #999; font-weight: 400; font-size: 10px; line-height: 12px; }
.cube .n { left: 27px; top: 2px; }
.cube .s { left: 27px; bottom: -1px; }
.cube .w { left: 1px; top: 27px; }
.cube .e { right: 1px; top: 27px; }
.wcs { position: absolute; right: 16px; top: 85px; width: 48px; height: 18px; gap: 7px; border: 1px solid #669; border-radius: 5px; background: #999; color: #666; font: 11px/16px "Liberation Sans", sans-serif; }
.wcs .dn { background: #99c; }
.nav { position: absolute; right: 2px; top: 126px; display: flex; flex-direction: column; align-items: center; width: 36px; height: 147px; border: 2px solid #000; border-radius: 6px; background: linear-gradient(90deg, #ccc 1px, #999 1px, #999 30px, #ccc 30px, #ccc 31px, #999 31px); }
.x { align-self: flex-end; margin: 2px 3px 7px 0; }
.wheel { width: 28px; height: 29px; border: 1px solid #06c; background: #ccf; }
.more { width: 28px; height: 10px; border: 1px solid #06c; border-top: 0; background: #ccf; }
.pan { margin-top: 4px; }
.zoom { flex-direction: column; margin-top: 2px; gap: 7px; }
.opt { margin-top: 11px; }
.sheets { display: flex; height: 16px; border-top: 1px solid #999; background: #fff; color: #000; line-height: 15px; }
.sheets button { width: 14px; border-right: 1px solid #999; }
.sheets a { width: 46px; padding-left: 4px; background: linear-gradient(107deg, transparent 42px, #333 42px, #333 43px, transparent 43px); }
.sheets .model { width: 45px; margin-left: 1px; padding-left: 9px; background: #333; color: #fff; clip-path: polygon(0 0, 100% 0, 88% 100%, 14% 100%); }
.cmd { display: flex; height: 194px; border-top: 6px solid #666; background: #ccc; }
.grip { display: flex; flex-direction: column; width: 22px; background: #666; border-right: 1px solid #666; }
.grip button { height: 35px; padding-top: 6px; background: #999; color: #fff; font-size: 14px; }
.grip .wrench { height: 18px; padding: 0; background: none; }
.grip span { margin-top: auto; height: 45px; background: #333; }
.log { flex: 1; min-width: 0; display: flex; flex-direction: column; }
.log ol { flex: 1; margin: 0; padding: 11px 0 0 1px; list-style: none; color: #000; font: 13px/15px "Noto Sans CJK SC", sans-serif; }
.log li { height: 15px; white-space: pre; }
.log span { font: 12px/15px "DejaVu Sans Mono", monospace; }
.prompt { display: flex; align-items: center; height: 23px; padding-left: 5px; border-top: 1px solid #666; background: #fff; }
.prompt input { flex: 1; min-width: 0; padding-left: 6px; font-style: italic; }
.prompt input::placeholder { color: #999; }

/* settings panel */
.side { flex: none; width: 243px; padding: 4px 1px 3px 4px; border-left: 1px solid #333; background: linear-gradient(90deg, #666 4px, #999 4px); color: #000; }
.sheet { display: flex; flex-direction: column; height: 100%; padding: 4px 5px 0 8px; border-radius: 4px; background: #fff; }
.side input[type=text], .side select, .side td, .scale label span { font-family: "Liberation Sans", "Noto Sans CJK SC", sans-serif; font-size: 11px; }
.side td:nth-child(2), .side #cls { font-size: 12px; }
fieldset { min-width: 0; margin: 0 4px 0 0; padding: 4px 9px 3px 11px; border: 1px solid #ccc; border-radius: 4px; }
legend { margin-left: -5px; padding: 0 2px; line-height: 16px; }
.row { display: flex; align-items: center; height: 24px; }
.second { margin: 3px 0 2px; }
.row > label { flex: none; }
.sel { position: relative; display: block; }
.sel::after { content: ""; position: absolute; right: 4px; top: 9px; width: 8px; height: 4px; background: #000; clip-path: polygon(0 0, 100% 0, 50% 100%); pointer-events: none; }
.sel select { display: block; appearance: none; width: 100%; height: 21px; padding: 0 3px; border: 1px solid #666; border-radius: 3px; background: linear-gradient(#fff 9px, #ccc 9px); }
.unit { width: 50px; margin-left: 21px; }
.prec { flex: 1; margin-left: 10px; }
.row input { flex: 1; min-width: 0; height: 17px; margin-left: 6px; padding: 0 1px; border: 1px solid #ccf; border-right-color: #cff; border-bottom-color: #cff; }
.pick { width: 24px; height: 17px; margin-left: 2px; border: 1px solid #ccc; border-right: 2px solid #666; border-bottom: 2px solid #666; }
.scale, .last { height: 23px; }
.scale label { width: 89px; white-space: nowrap; }
.rnd { width: 32px; height: 19px; margin-right: 10px; border: 1px solid #666; border-radius: 3px; background: linear-gradient(#fff 9px, #ccc 9px); }
.rnd + label { margin-left: -4px; }
.rnd:first-child { margin-left: 1px; }
.class { display: flex; align-items: center; margin: 7px 4px 3px 0; }
.class .sel { flex: 1; margin-left: 9px; }
.grid { display: grid; grid-template-columns: 1fr 16px; grid-template-rows: 144px 17px; padding: 1px 1px 0; border: 1px solid #999; }
.view { overflow: hidden; }
table { width: 230px; table-layout: fixed; border-collapse: separate; border-spacing: 0; }
th, td { height: 24px; padding: 0 0 2px 4px; text-align: left; font-weight: 400; line-height: 16px; white-space: nowrap; }
th { padding: 0 0 0 5px; border-bottom: 1px solid #ccc; }
.name { width: 100px; border-left: 1px solid #9cc; border-right: 1px solid #9cc; border-bottom: 2px solid #9cc; background: #cff; }
.val { width: 65px; border-right: 1px solid #ccc; }
th.no { width: 25px; }
td.no { padding: 0 2px 1px 0; text-align: center; border-right: 1px solid #ccc; border-bottom: 1px solid #ccc; }
.vbar { display: flex; flex-direction: column; align-items: center; padding: 7px 0 6px; border-left: 1px solid #ccc; }
.vbar .up, .vbar .dn { width: 6px; height: 4px; }
.vbar .dn { margin-top: auto; }
.thumb { border: 1px solid #999; border-radius: 2px; background: #ccc; }
.vbar .thumb { width: 14px; height: 46px; margin-top: 8px; background: repeating-linear-gradient(#666 0 1px, #fff 1px 3px) 3px 18px / 7px 8px no-repeat, linear-gradient(90deg, #fff 7px, #ccc 7px); }
.hbar { grid-column: 1 / 3; display: flex; align-items: center; padding: 0 24px 0 6px; }
.hbar .thumb { width: 147px; height: 15px; margin: 0 auto 0 8px; background: repeating-linear-gradient(90deg, #666 0 1px, #fff 1px 3px) 68px 3px / 8px 7px no-repeat, linear-gradient(#fff 7px, #ccc 7px); }
.lf, .rt { width: 4px; height: 6px; }
.acts { display: flex; align-items: center; height: 32px; margin-right: 4px; }
.acts output { width: 29px; height: 19px; margin-right: auto; border: 1px solid #999; border-width: 1px 0 0 1px; color: #f00; text-align: center; }
.acts label { display: flex; align-items: center; gap: 2px; margin-right: 5px; }
.acts input { appearance: none; width: 13px; height: 13px; border: 1px solid #999; background: linear-gradient(135deg, #ccc, #fff); outline: 1px solid #ccc; outline-offset: -3px; }
.sq { width: 28px; height: 24px; border: 1px solid #ccc; border-right: 2px solid #666; border-bottom: 2px solid #666; margin-left: 15px; }
label + .sq { margin-left: 0; }
.sq s { position: relative; padding: 0 2px; text-decoration: none; }
.sq s::after { content: ""; position: absolute; left: 0; right: 0; top: 8px; height: 1px; background: #f00; }
.sq .all::after { top: 6px; height: 5px; border: 1px solid #f00; border-width: 1px 0; background: none; }
.result { flex: 1; display: flex; min-height: 60px; border: 1px solid #99c; }
.result textarea { flex: 1; min-width: 0; resize: none; }
.off { width: 14px; }
.off i { background: #999; }
.foot { height: 28px; }
.foot a { margin-right: auto; color: #00f; }

/* status bar */
.status { display: flex; height: 29px; padding: 0 3px; border-top: 2px solid #333; border-bottom: 4px solid #ccc; background: #666; color: #000; }
.status output { flex: 1; min-width: 0; margin-right: 1px; padding-left: 11px; background: linear-gradient(#999 18px, #666 18px); font: 10px/24px "DejaVu Sans Mono", monospace; white-space: pre; }
.status button { width: 21px; height: 21px; margin-right: 1px; background: linear-gradient(#ccc 12px, #ccf 12px, #ccf 14px, #999 14px); }
.status .lit { background: linear-gradient(#cff 12px, #ccf 12px, #ccf 14px, #9cc 14px); }
.gap { width: 12px; background: #999; }
.status .txt { width: 28px; }
.gap.wide { width: 18px; }
.status .ratio { width: 33px; font-family: "DejaVu Sans Mono", monospace; font-size: 10px; }
.status .bulb { width: 24px; border: 1px solid #333; }
.status .down { width: 17px; }
.status .down .dn { width: 6px; height: 4px; background: #000; }
.status .resize { width: 16px; height: 18px; }
```
